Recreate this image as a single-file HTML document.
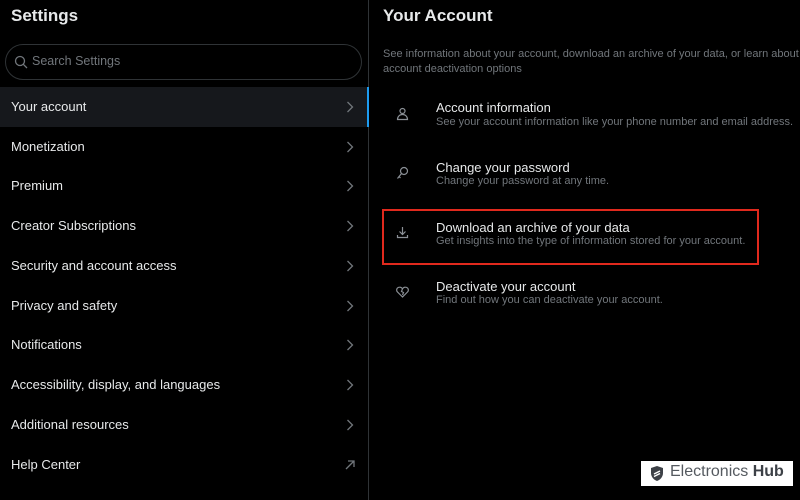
<!DOCTYPE html>
<html><head><style>
*{margin:0;padding:0;box-sizing:border-box}
body{width:800px;height:500px;background:#000;font-family:"Liberation Sans",sans-serif;color:#e7e9ea;position:relative;overflow:hidden}
.a{position:absolute;white-space:nowrap}
.row{position:absolute;left:0;width:368px;height:40px;font-size:13px;padding-left:11px;line-height:40px}
.chev{position:absolute;right:14px;top:14px}
.t{font-size:13px;color:#e7e9ea}
.s{font-size:11px;color:#71767b}
</style></head><body>
<div class="a" style="left:11px;top:6px;font-size:17px;font-weight:bold">Settings</div>
<div class="a" style="left:5px;top:44px;width:357px;height:36px;border:1px solid #2f3336;border-radius:18px"></div>
<svg class="a" style="left:14px;top:55px" width="14" height="14" viewBox="0 0 14 14"><circle cx="6" cy="6" r="4.5" fill="none" stroke="#71767b" stroke-width="1.3"/><path d="M9.3 9.3L13 13" stroke="#71767b" stroke-width="1.3"/></svg>
<div class="a" style="left:32px;top:54px;font-size:12.5px;color:#71767b">Search Settings</div>
<div class="a" style="left:368px;top:0;width:1px;height:500px;background:#2f3336"></div>
<div class="a" style="left:0;top:87px;width:368px;height:40px;background:#16181c"></div>
<div class="a" style="left:367px;top:87px;width:2px;height:40px;background:#1d9bf0"></div>
<div class="row" style="top:87px">Your account<svg class="chev" width="8" height="12"><path d="M1.5 1l5 5-5 5" fill="none" stroke="#71767b" stroke-width="1.3"/></svg></div>
<div class="row" style="top:127px">Monetization<svg class="chev" width="8" height="12"><path d="M1.5 1l5 5-5 5" fill="none" stroke="#71767b" stroke-width="1.3"/></svg></div>
<div class="row" style="top:166px">Premium<svg class="chev" width="8" height="12"><path d="M1.5 1l5 5-5 5" fill="none" stroke="#71767b" stroke-width="1.3"/></svg></div>
<div class="row" style="top:206px">Creator Subscriptions<svg class="chev" width="8" height="12"><path d="M1.5 1l5 5-5 5" fill="none" stroke="#71767b" stroke-width="1.3"/></svg></div>
<div class="row" style="top:246px">Security and account access<svg class="chev" width="8" height="12"><path d="M1.5 1l5 5-5 5" fill="none" stroke="#71767b" stroke-width="1.3"/></svg></div>
<div class="row" style="top:286px">Privacy and safety<svg class="chev" width="8" height="12"><path d="M1.5 1l5 5-5 5" fill="none" stroke="#71767b" stroke-width="1.3"/></svg></div>
<div class="row" style="top:325px">Notifications<svg class="chev" width="8" height="12"><path d="M1.5 1l5 5-5 5" fill="none" stroke="#71767b" stroke-width="1.3"/></svg></div>
<div class="row" style="top:365px">Accessibility, display, and languages<svg class="chev" width="8" height="12"><path d="M1.5 1l5 5-5 5" fill="none" stroke="#71767b" stroke-width="1.3"/></svg></div>
<div class="row" style="top:405px">Additional resources<svg class="chev" width="8" height="12"><path d="M1.5 1l5 5-5 5" fill="none" stroke="#71767b" stroke-width="1.3"/></svg></div>
<div class="row" style="top:445px">Help Center<svg class="chev" style="right:12px" width="12" height="12"><path d="M2 10L10 2M4 2h6v6" fill="none" stroke="#71767b" stroke-width="1.3"/></svg></div>

<div class="a" style="left:383px;top:6px;font-size:17px;font-weight:bold">Your Account</div>
<div class="a s" style="left:383px;top:47px;line-height:15px">See information about your account, download an archive of your data, or learn about your<br>account deactivation options</div>

<svg class="a" style="left:396px;top:107px" width="13" height="14" viewBox="0 0 13 14"><circle cx="6.5" cy="4" r="2.5" fill="none" stroke="#8b9096" stroke-width="1.2"/><path d="M1.5 12.5c0-3 2.2-5 5-5s5 2 5 5z" fill="none" stroke="#8b9096" stroke-width="1.2"/></svg>
<div class="a t" style="left:436px;top:100px">Account information</div>
<div class="a s" style="left:436px;top:116px">See your account information like your phone number and email address.</div>

<svg class="a" style="left:396px;top:166px" width="13" height="14" viewBox="0 0 13 14"><circle cx="8" cy="5" r="3.5" fill="none" stroke="#8b9096" stroke-width="1.2"/><path d="M5.5 7.5L1.5 12.5M3 10.5l1.5 1.5" fill="none" stroke="#8b9096" stroke-width="1.2"/></svg>
<div class="a t" style="left:436px;top:160px">Change your password</div>
<div class="a s" style="left:436px;top:175px">Change your password at any time.</div>

<div class="a" style="left:382px;top:209px;width:377px;height:56px;border:2px solid #e0291d"></div>
<svg class="a" style="left:396px;top:226px" width="13" height="13" viewBox="0 0 13 13"><path d="M6.5 1v7M3.5 5.5l3 3 3-3M1.5 9v2.5h10V9" fill="none" stroke="#8b9096" stroke-width="1.2"/></svg>
<div class="a t" style="left:436px;top:220px">Download an archive of your data</div>
<div class="a s" style="left:436px;top:235px">Get insights into the type of information stored for your account.</div>

<svg class="a" style="left:396px;top:286px" width="13" height="12" viewBox="0 0 13 12"><path d="M6.5 11L1.5 6C0 4.5.5 1.5 3.5 1.2 5 1 6 2 6.5 2.8 7 2 8 1 9.5 1.2 12.5 1.5 13 4.5 11.5 6z M6.5 2.8L5.5 5.5 7.5 6.5 6.5 9" fill="none" stroke="#8b9096" stroke-width="1.2"/></svg>
<div class="a t" style="left:436px;top:279px">Deactivate your account</div>
<div class="a s" style="left:436px;top:294px">Find out how you can deactivate your account.</div>

<div class="a" style="left:641px;top:461px;width:152px;height:25px;background:#fff"></div>
<svg class="a" style="left:649px;top:465px" width="16" height="17" viewBox="0 0 16 17"><path d="M8 1L2 3v5c0 4 3 7 6 8 3-1 6-4 6-8V3z" fill="#3d4147"/><path d="M5 9l6-3M5 11.5l6-3" stroke="#fff" stroke-width="1.5"/></svg>
<div class="a" style="left:670px;top:463px;font-size:16px;color:#555a60">Electronics <b style="color:#3d4147">Hub</b></div>
</body></html>
